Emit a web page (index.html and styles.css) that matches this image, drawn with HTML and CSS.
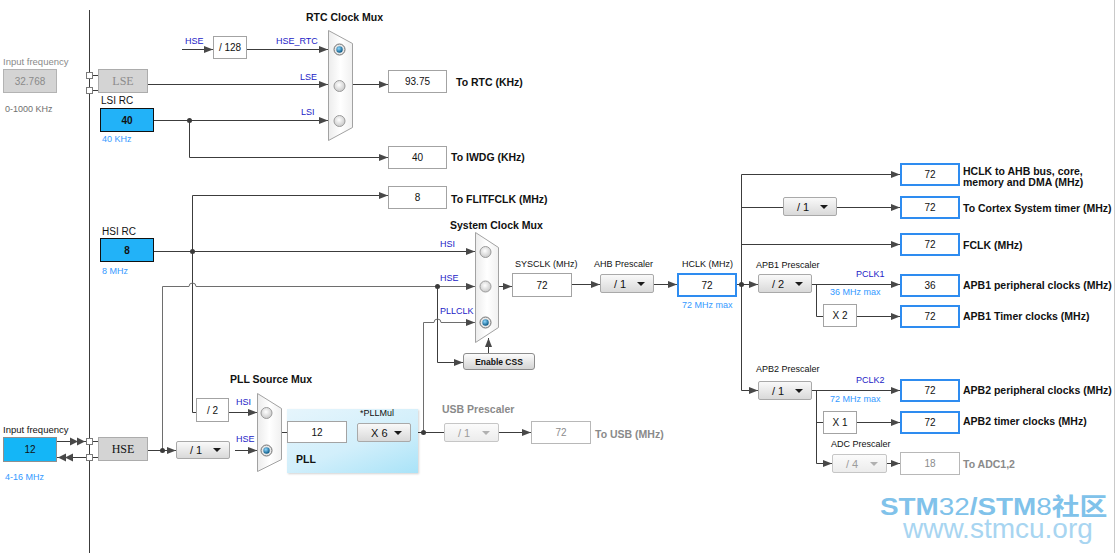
FILE: index.html
```html
<!DOCTYPE html>
<html lang="en">

<head>
  <meta charset="UTF-8">
  <title>Clock Configuration</title>
  <link rel="stylesheet" href="styles.css">
</head>

<body>
  <div class="clock-tree">
    <!-- wires, muxes and radio buttons -->
    <svg class="wires" width="1117" height="553" viewBox="0 0 1117 553">
      <defs>
        <marker id="arr" viewBox="0 0 9 7" refX="9" refY="3.5" markerWidth="9" markerHeight="7"
          markerUnits="userSpaceOnUse" orient="auto">
          <path d="M0 0L9 3.5L0 7z" fill="#484848" />
        </marker>
        <linearGradient id="muxFill" x1="0" x2="1" y1="0" y2="0">
          <stop offset="0" stop-color="#ececec" />
          <stop offset="0.5" stop-color="#ffffff" />
          <stop offset="1" stop-color="#f0f0f0" />
        </linearGradient>
        <radialGradient id="radioOff" cx="0.45" cy="0.4" r="0.65">
          <stop offset="0" stop-color="#ffffff" />
          <stop offset="1" stop-color="#c4c4c4" />
        </radialGradient>
        <radialGradient id="radioOn" cx="0.4" cy="0.35" r="0.7">
          <stop offset="0" stop-color="#8fd8ff" />
          <stop offset="1" stop-color="#00507e" />
        </radialGradient>
      </defs>

      <path class="edge" d="M1114.5 0V553" />
      <path class="w" d="M89.5 10V553" />

      <!-- RTC / LSE / LSI -->
      <path class="w" d="M92 75.5H98M92 90.5H98" />
      <path class="w" d="M182 49.5H213" marker-end="url(#arr)" />
      <path class="w" d="M247 49.5H328" marker-end="url(#arr)" />
      <path class="w" d="M148 84.5H328" marker-end="url(#arr)" />
      <path class="w" d="M154 120.5H328" marker-end="url(#arr)" />
      <path class="w" d="M189.5 120.5V157.5H388" marker-end="url(#arr)" />
      <path class="w" d="M353 84.5H388" marker-end="url(#arr)" />

      <!-- HSI / HSE / system mux -->
      <path class="w" d="M154 251.5H475" marker-end="url(#arr)" />
      <path class="w" d="M192.5 412.5V195.5H388" marker-end="url(#arr)" />
      <path class="w lt" d="M162.5 450.5V286.5H189a3.5 3.5 0 0 1 7 0H475" marker-end="url(#arr)" />
      <path class="w" d="M437.5 286.5V362.5H463" marker-end="url(#arr)" />
      <path class="w lt" d="M423.5 432.5V322.5H434a3.5 3.5 0 0 1 7 0H475" marker-end="url(#arr)" />
      <path class="w" d="M488.5 353V338" marker-end="url(#arr)" />
      <path class="w" d="M498 286.5H512" marker-end="url(#arr)" />
      <path class="w" d="M572 284.5H600" marker-end="url(#arr)" />
      <path class="w" d="M654 284.5H677" marker-end="url(#arr)" />
      <path class="w" d="M737 284.5H758" marker-end="url(#arr)" />

      <!-- AHB / APB buses -->
      <path class="w" d="M741.5 284.5V390.5H758" marker-end="url(#arr)" />
      <path class="w" d="M741.5 284.5V174.5H900" marker-end="url(#arr)" />
      <path class="w" d="M741.5 207.5H783" />
      <path class="w" d="M837 207.5H900" marker-end="url(#arr)" />
      <path class="w" d="M741.5 244.5H900" marker-end="url(#arr)" />
      <path class="w" d="M812 284.5H900" marker-end="url(#arr)" />
      <path class="w" d="M816.5 284.5V316.5H823" />
      <path class="w" d="M857 316.5H900" marker-end="url(#arr)" />
      <path class="w" d="M812 390.5H900" marker-end="url(#arr)" />
      <path class="w" d="M816.5 390.5V463.5H832" marker-end="url(#arr)" />
      <path class="w" d="M816.5 422.5H823" />
      <path class="w" d="M857 422.5H900" marker-end="url(#arr)" />
      <path class="w" d="M887 463.5H900" marker-end="url(#arr)" />

      <!-- HSE input / PLL -->
      <path class="w" d="M57 441.5H86M57 457.5H86" />
      <path class="head" d="M70 437.5L78 441.5L70 445.5zM77 437.5L85 441.5L77 445.5z" />
      <path class="head" d="M58 457.5L66 453.5L66 461.5zM65 457.5L73 453.5L73 461.5z" />
      <path class="w" d="M92 441.5H98M92 457.5H98" />
      <path class="w" d="M148 450.5H176" marker-end="url(#arr)" />
      <path class="w" d="M235 450.5H257" marker-end="url(#arr)" />
      <path class="w" d="M192.5 412.5H196" />
      <path class="w" d="M229 412.5H257" marker-end="url(#arr)" />
      <path class="w" d="M281 432.5H287" />
      <path class="w" d="M347 432.5H357" />
      <path class="w" d="M411 432.5H444" />
      <path class="w" d="M499 432.5H531" marker-end="url(#arr)" />

      <!-- pins on the left bus -->
      <rect class="pin" x="86.5" y="72.5" width="6" height="6" />
      <rect class="pin" x="86.5" y="87.5" width="6" height="6" />
      <rect class="pin" x="86.5" y="438.5" width="6" height="6" />
      <rect class="pin" x="86.5" y="454.5" width="6" height="6" />

      <!-- junctions -->
      <circle class="dot" cx="189.5" cy="120.5" r="2.5" />
      <circle class="dot" cx="192.5" cy="251.5" r="2.5" />
      <circle class="dot" cx="437.5" cy="286.5" r="2.5" />
      <circle class="dot" cx="162.5" cy="450.5" r="2.5" />
      <circle class="dot" cx="423.5" cy="432.5" r="2.5" />
      <circle class="dot" cx="741.5" cy="284.5" r="2.5" />

      <!-- muxes -->
      <polygon class="mux" points="328.5,30.5 352.5,43.5 352.5,127.5 328.5,140.5" />
      <polygon class="mux" points="475.5,232.5 498.5,247.5 498.5,327.5 475.5,342.5" />
      <polygon class="mux" points="257.5,393.5 281.5,408.5 281.5,459.5 257.5,471.5" />

      <circle class="radio on" cx="339.5" cy="49.5" r="5.5" />
      <circle class="radio-dot" cx="339.5" cy="49.5" r="3.2" />
      <circle class="radio" cx="339.5" cy="86" r="5.5" />
      <circle class="radio" cx="339.5" cy="121" r="5.5" />

      <circle class="radio" cx="485.5" cy="252" r="5.5" />
      <circle class="radio" cx="485.5" cy="286.5" r="5.5" />
      <circle class="radio on" cx="485.5" cy="322.5" r="5.5" />
      <circle class="radio-dot" cx="485.5" cy="322.5" r="3.2" />

      <circle class="radio" cx="266.5" cy="413" r="5.5" />
      <circle class="radio on" cx="266.5" cy="450.5" r="5.5" />
      <circle class="radio-dot" cx="266.5" cy="450.5" r="3.2" />
    </svg>

    <!-- LSE / LSI / RTC -->
    <div class="lbl dim p-lse-in-lbl">Input frequency</div>
    <div class="box gray p-lse-in">32.768</div>
    <div class="lbl range p-lse-range">0-1000 KHz</div>
    <div class="box osc faded p-lse">LSE</div>
    <div class="lbl p-lsi-lbl">LSI RC</div>
    <div class="box src p-lsi">40</div>
    <div class="lbl hint p-lsi-hint">40 KHz</div>

    <div class="lbl sig p-rtc-hse">HSE</div>
    <div class="box p-div128">/ 128</div>
    <div class="lbl sig p-hse-rtc">HSE_RTC</div>
    <div class="lbl sig p-rtc-lse">LSE</div>
    <div class="lbl sig p-rtc-lsi">LSI</div>
    <div class="lbl title p-rtc-title">RTC Clock Mux</div>

    <div class="box p-rtc">93.75</div>
    <div class="lbl title p-rtc-to">To RTC (KHz)</div>
    <div class="box p-iwdg">40</div>
    <div class="lbl title p-iwdg-to">To IWDG (KHz)</div>
    <div class="box p-flit">8</div>
    <div class="lbl title p-flit-to">To FLITFCLK (MHz)</div>

    <!-- HSI / system clock -->
    <div class="lbl p-hsi-lbl">HSI RC</div>
    <div class="box src p-hsi">8</div>
    <div class="lbl hint p-hsi-hint">8 MHz</div>

    <div class="lbl title p-sys-title">System Clock Mux</div>
    <div class="lbl sig p-sys-hsi">HSI</div>
    <div class="lbl sig p-sys-hse">HSE</div>
    <div class="lbl sig p-sys-pll">PLLCLK</div>
    <div class="btn p-css">Enable CSS</div>

    <div class="lbl p-sysclk-lbl">SYSCLK (MHz)</div>
    <div class="box p-sysclk">72</div>
    <div class="lbl p-ahb-lbl">AHB Prescaler</div>
    <div class="dd p-ahb">/ 1</div>
    <div class="lbl p-hclk-lbl">HCLK (MHz)</div>
    <div class="box out p-hclk">72</div>
    <div class="lbl hint p-hclk-hint">72 MHz max</div>

    <!-- AHB / APB1 / APB2 outputs -->
    <div class="dd p-cortex">/ 1</div>
    <div class="lbl p-apb1-lbl">APB1 Prescaler</div>
    <div class="dd p-apb1">/ 2</div>
    <div class="lbl sig p-pclk1">PCLK1</div>
    <div class="lbl hint p-pclk1-hint">36 MHz max</div>
    <div class="box p-x2">X 2</div>

    <div class="lbl p-apb2-lbl">APB2 Prescaler</div>
    <div class="dd p-apb2">/ 1</div>
    <div class="lbl sig p-pclk2">PCLK2</div>
    <div class="lbl hint p-pclk2-hint">72 MHz max</div>
    <div class="box p-x1">X 1</div>
    <div class="lbl p-adc-lbl">ADC Prescaler</div>
    <div class="dd off p-adc">/ 4</div>

    <div class="box out res p-r-ahb">72</div>
    <div class="box out res p-r-cortex">72</div>
    <div class="box out res p-r-fclk">72</div>
    <div class="box out res p-r-apb1">36</div>
    <div class="box out res p-r-apb1t">72</div>
    <div class="box out res p-r-apb2">72</div>
    <div class="box out res p-r-apb2t">72</div>
    <div class="box off res p-r-adc">18</div>

    <div class="lbl title two p-t-ahb">HCLK to AHB bus, core,<br>memory and DMA (MHz)</div>
    <div class="lbl title p-t-cortex">To Cortex System timer (MHz)</div>
    <div class="lbl title p-t-fclk">FCLK (MHz)</div>
    <div class="lbl title p-t-apb1">APB1 peripheral clocks (MHz)</div>
    <div class="lbl title p-t-apb1t">APB1 Timer clocks (MHz)</div>
    <div class="lbl title p-t-apb2">APB2 peripheral clocks (MHz)</div>
    <div class="lbl title p-t-apb2t">APB2 timer clocks (MHz)</div>
    <div class="lbl title dim p-t-adc">To ADC1,2</div>

    <!-- HSE input / PLL / USB -->
    <div class="lbl p-hse-in-lbl">Input frequency</div>
    <div class="box src soft p-hse-in">12</div>
    <div class="lbl hint p-hse-range">4-16 MHz</div>
    <div class="box osc p-hse">HSE</div>
    <div class="dd p-hse-div">/ 1</div>
    <div class="box p-hsi-div2">/ 2</div>
    <div class="lbl sig p-pll-hsi">HSI</div>
    <div class="lbl sig p-pll-hse">HSE</div>
    <div class="lbl title p-pllsrc-title">PLL Source Mux</div>

    <div class="pll"></div>
    <div class="box p-pll-in">12</div>
    <div class="lbl p-pllmul-lbl">*PLLMul</div>
    <div class="dd p-pllmul">X 6</div>
    <div class="lbl title p-pll-name">PLL</div>

    <div class="lbl title dim p-usb-lbl">USB Prescaler</div>
    <div class="dd off p-usb">/ 1</div>
    <div class="box off p-usb-out">72</div>
    <div class="lbl title dim p-usb-to">To USB (MHz)</div>

    <div class="watermark">
      <div class="wm-brand">STM<span class="thin">32</span>/STM<span class="thin">8</span>社区</div>
      <div class="wm-url">www.stmcu.org</div>
    </div>
  </div>
</body>

</html>
```

FILE: styles.css
```css
* {
  box-sizing: border-box;
}

body {
  margin: 0;
  background: #fff;
  font-family: "Liberation Sans", Arial, sans-serif;
  overflow: hidden;
}

.clock-tree {
  position: relative;
  width: 1117px;
  height: 553px;
  background: #fff;
}

.wires {
  position: absolute;
  left: 0;
  top: 0;
}

.w {
  fill: none;
  stroke: #3c3c3c;
  stroke-width: 1;
}

.w.lt {
  stroke: #6e6e6e;
}

.edge {
  stroke: #c9c9c9;
  stroke-width: 1;
}

.head {
  fill: #484848;
}

.pin {
  fill: #fff;
  stroke: #7a7a7a;
}

.dot {
  fill: #3a3a3a;
}

.mux {
  fill: url(#muxFill);
  stroke: #a2a2a2;
}

.radio {
  fill: url(#radioOff);
  stroke: #9c9c9c;
}

.radio.on {
  fill: #e8e8e8;
  stroke: #6f6f6f;
}

.radio-dot {
  fill: url(#radioOn);
}

/* text labels */
.lbl {
  position: absolute;
  font-size: 9px;
  line-height: 12px;
  white-space: nowrap;
  color: #111;
}

.lbl.title {
  font-size: 10.5px;
  font-weight: bold;
}

.lbl.two {
  line-height: 11px;
}

.lbl.sig {
  color: #2323c6;
}

.lbl.hint {
  color: #3399ff;
}

.lbl.dim {
  color: #8a8a8a;
}

.lbl.range {
  color: #707070;
}

/* value boxes */
.box {
  position: absolute;
  display: flex;
  align-items: center;
  justify-content: center;
  background: #fff;
  border: 1px solid #a3a3a3;
  font-size: 10px;
  color: #111;
}

.box.out {
  border: 2px solid #2e8cf0;
}

.box.off {
  color: #8c8c8c;
  border-color: #b8b8b8;
}

.box.src {
  background: #22b2f8;
  border-color: #111;
  font-weight: bold;
}

.box.src.soft {
  background: #14b6f7;
  border-color: #8f8f8f;
  font-weight: normal;
}

.box.gray {
  background: #d4d4d4;
  border-color: #b3b3b3;
  color: #8a8a8a;
}

.box.osc {
  background: #d4d4d4;
  border-color: #acacac;
  font-family: "Liberation Serif", serif;
  font-size: 12px;
}

.box.osc.faded {
  color: #8c8c8c;
}

.box.res {
  left: 900px;
  width: 60px;
  height: 23px;
}

/* drop-down prescalers */
.dd {
  position: absolute;
  height: 19px;
  width: 54px;
  display: flex;
  align-items: center;
  justify-content: space-between;
  padding: 0 8px 0 13px;
  border: 1px solid #a9a9a9;
  border-radius: 2px;
  background: linear-gradient(#f9f9f9, #d9d9d9);
  font-size: 11px;
  color: #111;
}

.dd::after {
  content: '';
  border-left: 4px solid transparent;
  border-right: 4px solid transparent;
  border-top: 4px solid #1a1a1a;
}

.dd.off {
  color: #9c9c9c;
  border-color: #c6c6c6;
  background: linear-gradient(#fbfbfb, #ececec);
}

.dd.off::after {
  border-top-color: #b0b0b0;
}

.btn {
  position: absolute;
  display: flex;
  align-items: center;
  justify-content: center;
  border: 1px solid #8c8c8c;
  border-radius: 3px;
  background: linear-gradient(#fcfcfc, #d3d3d3);
  font-size: 8.5px;
  font-weight: bold;
  color: #111;
}

.pll {
  position: absolute;
  left: 287px;
  top: 409px;
  width: 131px;
  height: 64px;
  background: linear-gradient(160deg, #e6f5fc 0%, #d2effb 55%, #a9e3f8 100%);
  box-shadow: 1px 1px 2px rgba(0, 0, 0, 0.18);
}

/* LSE / LSI / RTC */
.p-lse-in-lbl { left: 3px; top: 56px; font-size: 9.5px; }
.p-lse-in { left: 3px; top: 69px; width: 54px; height: 24px; }
.p-lse-range { left: 5px; top: 103px; }
.p-lse { left: 98px; top: 69px; width: 50px; height: 24px; }
.p-lsi-lbl { left: 101px; top: 95px; font-size: 10px; }
.p-lsi { left: 100px; top: 108px; width: 54px; height: 24px; }
.p-lsi-hint { left: 102px; top: 133px; }
.p-rtc-hse { left: 185px; top: 35px; }
.p-div128 { left: 213px; top: 36px; width: 34px; height: 23px; }
.p-hse-rtc { left: 276px; top: 35px; }
.p-rtc-lse { left: 300px; top: 71px; }
.p-rtc-lsi { left: 301px; top: 106px; }
.p-rtc-title { left: 306px; top: 11px; }
.p-rtc { left: 388px; top: 70px; width: 59px; height: 23px; }
.p-rtc-to { left: 456px; top: 76px; }
.p-iwdg { left: 388px; top: 146px; width: 59px; height: 23px; }
.p-iwdg-to { left: 451px; top: 151px; }
.p-flit { left: 388px; top: 186px; width: 59px; height: 23px; }
.p-flit-to { left: 451px; top: 193px; }

/* HSI / system clock */
.p-hsi-lbl { left: 102px; top: 226px; font-size: 10px; }
.p-hsi { left: 100px; top: 238px; width: 54px; height: 24px; }
.p-hsi-hint { left: 102px; top: 265px; }
.p-sys-title { left: 450px; top: 219px; }
.p-sys-hsi { left: 440px; top: 238px; }
.p-sys-hse { left: 440px; top: 272px; }
.p-sys-pll { left: 440px; top: 305px; }
.p-css { left: 463px; top: 353px; width: 72px; height: 17px; }
.p-sysclk-lbl { left: 515px; top: 258px; }
.p-sysclk { left: 512px; top: 273px; width: 60px; height: 24px; }
.p-ahb-lbl { left: 594px; top: 258px; }
.p-ahb { left: 600px; top: 274px; }
.p-hclk-lbl { left: 682px; top: 258px; }
.p-hclk { left: 677px; top: 273px; width: 60px; height: 24px; }
.p-hclk-hint { left: 682px; top: 299px; }

/* AHB / APB */
.p-cortex { left: 783px; top: 197px; }
.p-apb1-lbl { left: 756px; top: 259px; }
.p-apb1 { left: 758px; top: 274px; }
.p-pclk1 { left: 856px; top: 268px; }
.p-pclk1-hint { left: 830px; top: 286px; }
.p-x2 { left: 823px; top: 304px; width: 34px; height: 23px; }
.p-apb2-lbl { left: 756px; top: 363px; }
.p-apb2 { left: 758px; top: 381px; }
.p-pclk2 { left: 856px; top: 374px; }
.p-pclk2-hint { left: 830px; top: 393px; }
.p-x1 { left: 823px; top: 411px; width: 34px; height: 23px; }
.p-adc-lbl { left: 831px; top: 438px; }
.p-adc { left: 832px; top: 454px; width: 55px; }

.p-r-ahb { top: 163px; }
.p-r-cortex { top: 196px; }
.p-r-fclk { top: 233px; }
.p-r-apb1 { top: 274px; }
.p-r-apb1t { top: 305px; }
.p-r-apb2 { top: 379px; }
.p-r-apb2t { top: 411px; }
.p-r-adc { top: 452px; }

.p-t-ahb { left: 963px; top: 166px; }
.p-t-cortex { left: 963px; top: 202px; }
.p-t-fclk { left: 963px; top: 239px; }
.p-t-apb1 { left: 963px; top: 279px; }
.p-t-apb1t { left: 963px; top: 310px; }
.p-t-apb2 { left: 963px; top: 384px; }
.p-t-apb2t { left: 963px; top: 415px; }
.p-t-adc { left: 963px; top: 458px; }

/* HSE / PLL / USB */
.p-hse-in-lbl { left: 3px; top: 424px; font-size: 9.5px; }
.p-hse-in { left: 3px; top: 437px; width: 54px; height: 25px; }
.p-hse-range { left: 5px; top: 471px; }
.p-hse { left: 98px; top: 437px; width: 50px; height: 24px; }
.p-hse-div { left: 176px; top: 441px; height: 18px; }
.p-hsi-div2 { left: 196px; top: 398px; width: 33px; height: 24px; }
.p-pll-hsi { left: 236px; top: 396px; }
.p-pll-hse { left: 236px; top: 433px; }
.p-pllsrc-title { left: 230px; top: 373px; }
.p-pll-in { left: 287px; top: 421px; width: 60px; height: 22px; }
.p-pllmul-lbl { left: 360px; top: 407px; }
.p-pllmul { left: 357px; top: 423px; }
.p-pll-name { left: 296px; top: 453px; font-size: 11px; }
.p-usb-lbl { left: 442px; top: 403px; }
.p-usb { left: 444px; top: 423px; width: 55px; }
.p-usb-out { left: 531px; top: 421px; width: 60px; height: 23px; }
.p-usb-to { left: 595px; top: 428px; }

/* watermark */
.watermark {
  position: absolute;
  left: 880px;
  top: 494px;
  font-family: "Liberation Sans", "Noto Sans CJK SC", sans-serif;
  pointer-events: none;
}

.wm-brand {
  font-size: 24px;
  line-height: 26px;
  font-weight: bold;
  color: #80c2ea;
  white-space: nowrap;
  transform: scaleX(1.16);
  transform-origin: left center;
}

.wm-brand .thin {
  font-weight: normal;
}

.wm-url {
  margin-left: 23px;
  font-size: 28px;
  line-height: 17px;
  color: #a8d5f1;
  white-space: nowrap;
}
```
